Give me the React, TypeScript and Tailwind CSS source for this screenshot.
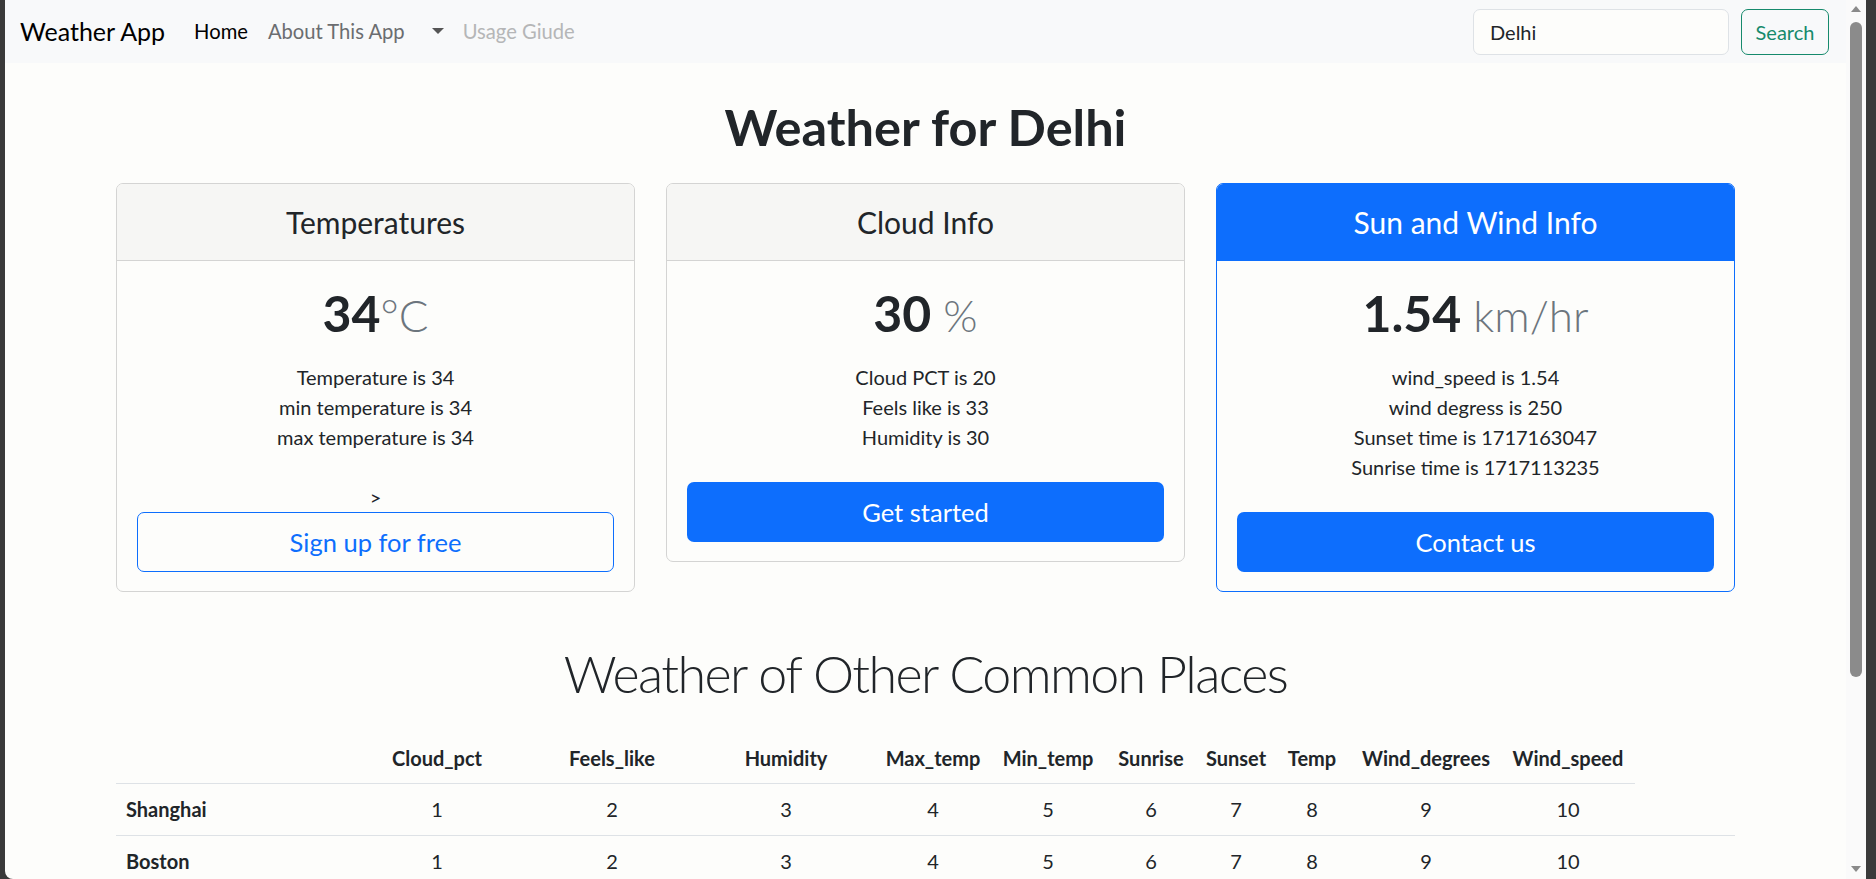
import React from "react";

const cols = [233, 176, 174, 174, 120, 110, 96, 74, 78, 150, 134, 100];
const heads = ["Cloud_pct", "Feels_like", "Humidity", "Max_temp", "Min_temp", "Sunrise", "Sunset", "Temp", "Wind_degrees", "Wind_speed"];
const places = ["Shanghai", "Boston"];

const Navbar = () => {
    return (
        <nav className="h-[63px] bg-[#f8f9fa] flex items-center pl-[15px] pr-[17px]">
            <span className="text-[25px] text-black mr-[19px]">Weather App</span>
            <div className="flex items-center text-[20.2px]">
                <a className="px-[10px] text-black">Home</a>
                <a className="px-[10px] text-[#6b6d70]">About This App</a>
                <a className="pl-[17px] pr-[9px] flex items-center h-[30px] text-[#6b6d70]">
                    <span className="block w-0 h-0 border-x-[6px] border-x-transparent border-t-[6px] border-t-[#555]" />
                </a>
                <a className="px-[10px] text-[#b5b6b7]">Usage Giude</a>
            </div>

            {/* search */}
            <form className="ml-auto flex items-center gap-[12px]">
                <input
                    defaultValue="Delhi"
                    className="w-[256px] h-[46px] rounded-[7px] border border-[#dee2e6] bg-[#fdfdfb] px-[16px] text-[20px] text-[#212529] outline-none"
                />
                <button type="button" className="w-[88px] h-[46px] rounded-[7px] border border-[#168a6c] text-[#168a6c] text-[20px]">
                    Search
                </button>
            </form>
        </nav>
    );
};

type CardProps = {
    title: string;
    value: string;
    unit: string;
    lines: string[];
    extra?: boolean;
    cta: string;
    primary?: boolean;
    outline?: boolean;
};

const Card = ({ title, value, unit, lines, extra, cta, primary, outline }: CardProps) => {
    return (
        <div className={`rounded-[7px] border overflow-hidden bg-[#fdfdfb] ${primary ? "border-[#0d6efd]" : "border-[#d4d4d3]"}`}>
            <div className={`h-[77px] border-b flex items-center justify-center text-[30px] ${primary ? "bg-[#0d6efd] border-[#0d6efd] text-white" : "bg-[#f6f6f4] border-[#d4d4d3] text-[#212529]"}`}>
                {title}
            </div>
            <div className="px-[20px] pt-[23px] pb-[19px] text-center text-[#212529]">
                <div className="text-[50px] leading-[58px] font-bold">
                    {value}
                    <small className="text-[44px] font-light text-[#6c757d]">{unit}</small>
                </div>
                <ul className="mt-[18px] text-[20px] leading-[30px]">
                    {lines.map((l) => (
                        <li key={l}>{l}</li>
                    ))}
                </ul>
                <div className="h-[30px]" />
                {extra && <div className="text-[20px] leading-[30px]">&gt;</div>}
                <button
                    type="button"
                    className={`w-full h-[60px] rounded-[7px] text-[25.5px] ${outline ? "border border-[#0d6efd] text-[#0d6efd]" : "bg-[#0d6efd] text-white"}`}
                >
                    {cta}
                </button>
            </div>
        </div>
    );
};

const Scrollbar = () => {
    return (
        <div className="w-[20px] shrink-0 bg-[#fafafa] relative">
            <span className="absolute left-[5px] top-[6px] w-0 h-0 border-x-[5px] border-x-transparent border-b-[6px] border-b-[#8a8a8a]" />
            <div className="absolute left-[4px] top-[22px] h-[655px] w-[12px] rounded-full bg-[#8b8b8b]" />
            <span className="absolute left-[5px] bottom-[7px] w-0 h-0 border-x-[5px] border-x-transparent border-t-[6px] border-t-[#8a8a8a]" />
        </div>
    );
};

export default function App() {
    return (
        <div className="flex w-[1876px] h-[879px] overflow-hidden bg-[#3a3a3a] font-['Lato','Open_Sans',sans-serif]">
            <div className="w-[5px] shrink-0" />
            <div className="flex-1 overflow-hidden bg-[#fdfdfb] rounded-bl-[8px]">
                <Navbar />

                <main className="w-[1619px] mx-auto pt-[35px]">
                    <h1 className="text-center text-[50.5px] leading-[58px] font-bold text-[#212529]">Weather for Delhi</h1>

                    {/* cards */}
                    <div className="mt-[27px] grid grid-cols-3 gap-x-[31px] items-start">
                        <Card
                            title="Temperatures"
                            value="34"
                            unit="°C"
                            lines={["Temperature is 34", "min temperature is 34", "max temperature is 34"]}
                            extra
                            cta="Sign up for free"
                            outline
                        />
                        <Card
                            title="Cloud Info"
                            value="30"
                            unit=" %"
                            lines={["Cloud PCT is 20", "Feels like is 33", "Humidity is 30"]}
                            cta="Get started"
                        />
                        <Card
                            title="Sun and Wind Info"
                            value="1.54"
                            unit=" km/hr"
                            lines={["wind_speed is 1.54", "wind degress is 250", "Sunset time is 1717163047", "Sunrise time is 1717113235"]}
                            cta="Contact us"
                            primary
                        />
                    </div>

                    {/* other places */}
                    <h2 className="mt-[47px] text-center text-[52px] tracking-[-1.6px] leading-[69px] font-light text-[#212529]">
                        Weather of Other Common Places
                    </h2>
                    <table className="mt-[25px] w-full table-fixed border-collapse text-[20px] text-[#212529]">
                        <colgroup>
                            {cols.map((w, i) => (
                                <col key={i} style={{ width: w }} />
                            ))}
                        </colgroup>
                        <thead>
                            <tr>
                                <th className="h-[50px] border-b border-[#dee2e6]" />
                                {heads.map((h) => (
                                    <th key={h} className="h-[50px] border-b border-[#dee2e6] font-bold text-center whitespace-nowrap">
                                        {h}
                                    </th>
                                ))}
                            </tr>
                        </thead>
                        <tbody>
                            {places.map((p) => (
                                <tr key={p}>
                                    <th className="h-[52px] border-b border-[#dee2e6] text-left pl-[10px] font-bold">{p}</th>
                                    {heads.map((h, i) => (
                                        <td key={h} className="h-[52px] border-b border-[#dee2e6] text-center">
                                            {i + 1}
                                        </td>
                                    ))}
                                    <td className="h-[52px] border-b border-[#dee2e6]" />
                                </tr>
                            ))}
                        </tbody>
                    </table>
                </main>
            </div>
            <Scrollbar />
            <div className="w-[10px] shrink-0" />
        </div>
    );
}
